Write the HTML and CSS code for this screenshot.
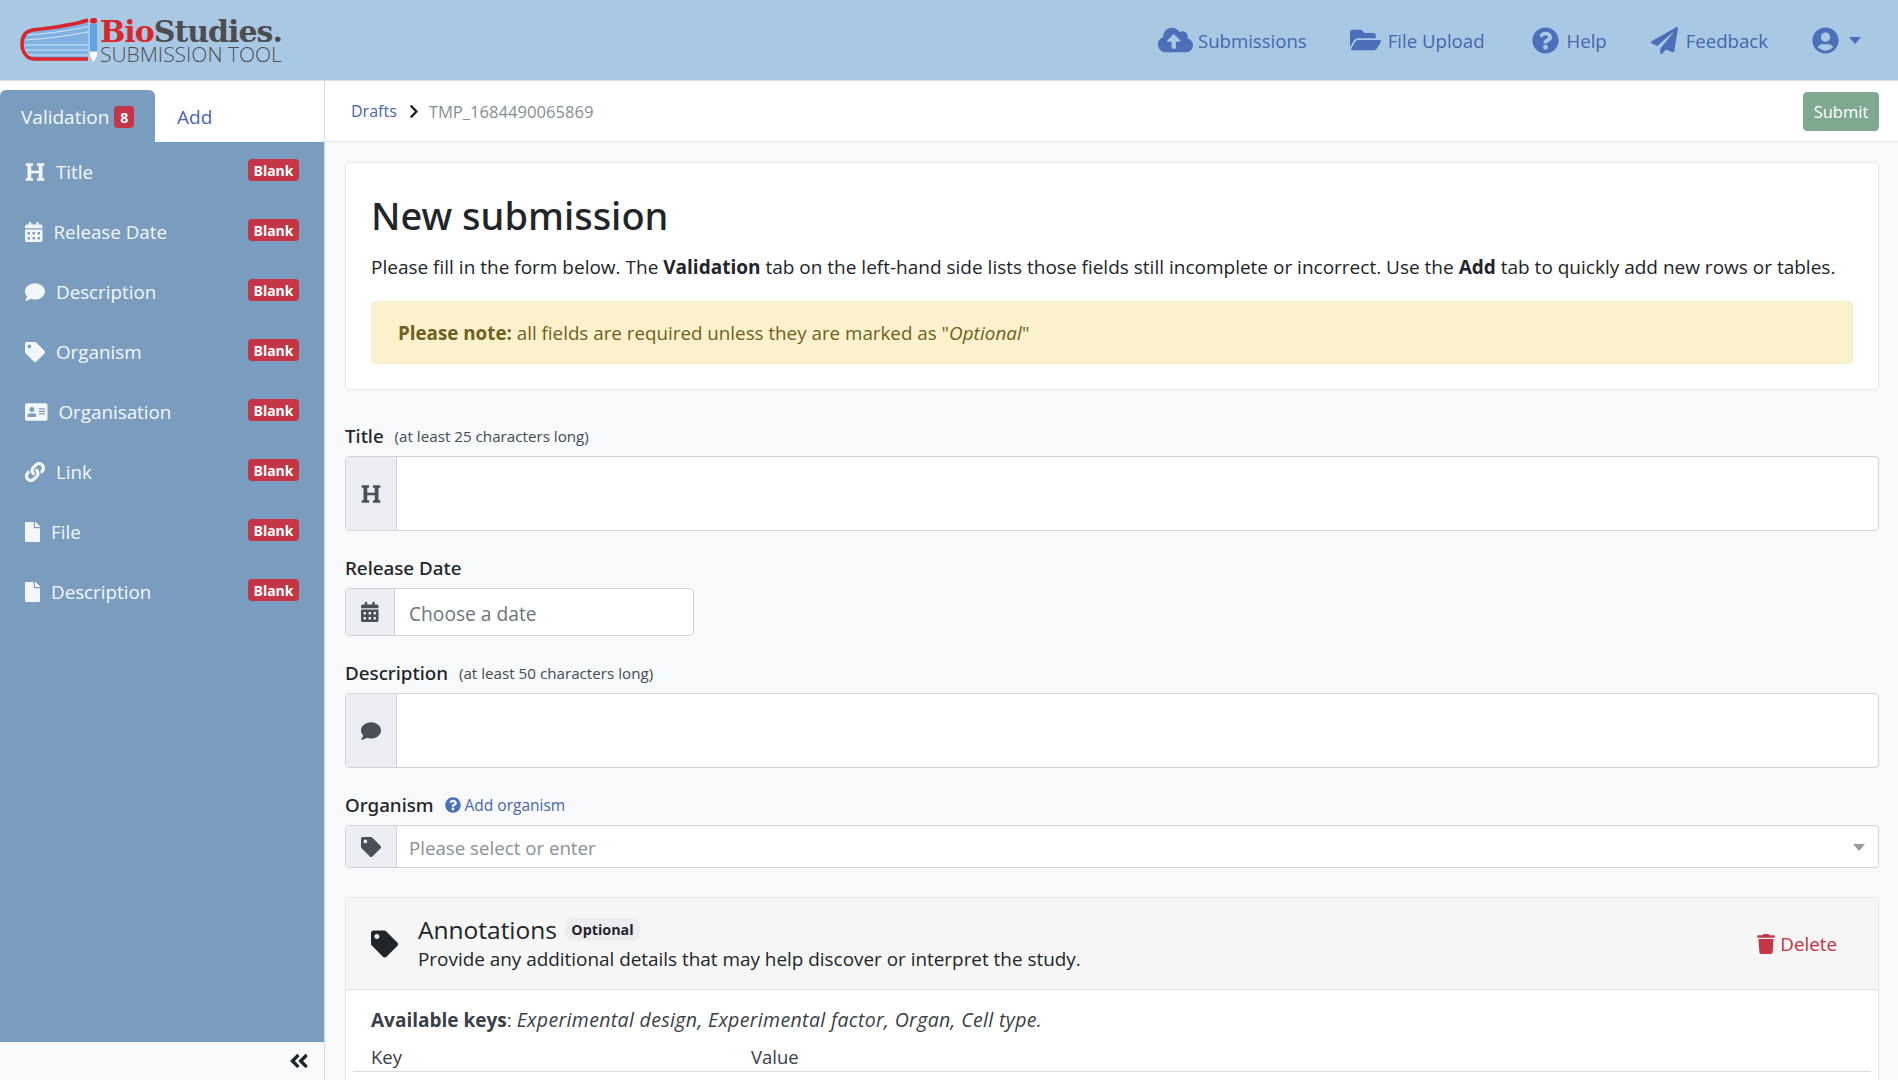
FILE: index.html
```html
<!DOCTYPE html>
<html lang="en">
<head>
<meta charset="utf-8">
<title>BioStudies Submission Tool</title>
<link rel="stylesheet" href="styles.css">
</head>
<body>
<svg class="sprite" xmlns="http://www.w3.org/2000/svg">
<defs>
<path id="i-heading" d="M448 96v320h32a16 16 0 0 1 16 16v32a16 16 0 0 1-16 16H320a16 16 0 0 1-16-16v-32a16 16 0 0 1 16-16h32V288H160v128h32a16 16 0 0 1 16 16v32a16 16 0 0 1-16 16H32a16 16 0 0 1-16-16v-32a16 16 0 0 1 16-16h32V96H32a16 16 0 0 1-16-16V48a16 16 0 0 1 16-16h160a16 16 0 0 1 16 16v32a16 16 0 0 1-16 16h-32v128h192V96h-32a16 16 0 0 1-16-16V48a16 16 0 0 1 16-16h160a16 16 0 0 1 16 16v32a16 16 0 0 1-16 16z"/>
<path id="i-cal" d="M0 464c0 26.5 21.5 48 48 48h352c26.5 0 48-21.5 48-48V192H0v272zm320-196c0-6.6 5.4-12 12-12h40c6.6 0 12 5.4 12 12v40c0 6.6-5.4 12-12 12h-40c-6.6 0-12-5.4-12-12v-40zm0 128c0-6.6 5.4-12 12-12h40c6.6 0 12 5.4 12 12v40c0 6.6-5.4 12-12 12h-40c-6.6 0-12-5.4-12-12v-40zM192 268c0-6.6 5.4-12 12-12h40c6.6 0 12 5.4 12 12v40c0 6.6-5.4 12-12 12h-40c-6.6 0-12-5.4-12-12v-40zm0 128c0-6.6 5.4-12 12-12h40c6.6 0 12 5.4 12 12v40c0 6.6-5.4 12-12 12h-40c-6.6 0-12-5.4-12-12v-40zM64 268c0-6.6 5.4-12 12-12h40c6.6 0 12 5.4 12 12v40c0 6.6-5.4 12-12 12H76c-6.6 0-12-5.4-12-12v-40zm0 128c0-6.6 5.4-12 12-12h40c6.6 0 12 5.4 12 12v40c0 6.6-5.4 12-12 12H76c-6.6 0-12-5.4-12-12v-40zM400 64h-48V16c0-8.8-7.2-16-16-16h-32c-8.8 0-16 7.2-16 16v48H160V16c0-8.8-7.2-16-16-16h-32c-8.8 0-16 7.2-16 16v48H48C21.5 64 0 85.5 0 112v48h448v-48c0-26.5-21.5-48-48-48z"/>
<path id="i-comment" d="M256 32C114.6 32 0 125.1 0 240c0 49.6 21.4 95 57 130.7C44.5 421.1 2.7 466 2.2 466.5c-2.2 2.3-2.8 5.7-1.5 8.7S4.8 480 8 480c66.3 0 116-31.8 140.6-51.4 32.7 12.3 69 19.4 107.4 19.4 141.4 0 256-93.1 256-208S397.4 32 256 32z"/>
<path id="i-tag" d="M0 252.118V48C0 21.49 21.49 0 48 0h204.118a48 48 0 0 1 33.941 14.059l211.882 211.882c18.745 18.745 18.745 49.137 0 67.882L293.823 497.941c-18.745 18.745-49.137 18.745-67.882 0L14.059 286.059A48 48 0 0 1 0 252.118zM112 64c-26.51 0-48 21.49-48 48s21.49 48 48 48 48-21.49 48-48-21.49-48-48-48z"/>
<path id="i-card" d="M528 32H48C21.5 32 0 53.5 0 80v352c0 26.5 21.5 48 48 48h480c26.5 0 48-21.5 48-48V80c0-26.5-21.5-48-48-48zm-352 96c35.3 0 64 28.7 64 64s-28.7 64-64 64-64-28.7-64-64 28.7-64 64-64zm112 236.8c0 10.6-10 19.2-22.4 19.2H86.4C74 384 64 375.4 64 364.8v-19.2c0-31.8 30.1-57.6 67.2-57.6h5c12.3 5.1 25.7 8 39.8 8s27.6-2.9 39.8-8h5c37.1 0 67.2 25.8 67.2 57.6v19.2zM512 312c0 4.4-3.6 8-8 8H360c-4.4 0-8-3.6-8-8v-16c0-4.4 3.6-8 8-8h144c4.4 0 8 3.6 8 8v16zm0-64c0 4.4-3.6 8-8 8H360c-4.4 0-8-3.6-8-8v-16c0-4.4 3.6-8 8-8h144c4.4 0 8 3.6 8 8v16zm0-64c0 4.4-3.6 8-8 8H360c-4.4 0-8-3.6-8-8v-16c0-4.4 3.6-8 8-8h144c4.4 0 8 3.6 8 8v16z"/>
<path id="i-link" d="M326.612 185.391c59.747 59.809 58.927 155.698.36 214.59-.11.12-.24.25-.36.37l-67.2 67.2c-59.27 59.27-155.699 59.262-214.96 0-59.27-59.26-59.27-155.7 0-214.96l37.106-37.106c9.84-9.84 26.786-3.3 27.294 10.606.648 17.722 3.826 35.527 9.69 52.721 1.986 5.822.567 12.262-3.783 16.612l-13.087 13.087c-28.026 28.026-28.905 73.66-1.155 101.96 28.024 28.579 74.086 28.749 102.325.51l67.2-67.19c28.191-28.191 28.073-73.757 0-101.83-3.701-3.694-7.429-6.564-10.341-8.569a16.037 16.037 0 0 1-6.947-12.606c-.396-10.567 3.348-21.456 11.698-29.806l21.054-21.055c5.521-5.521 14.182-6.199 20.584-1.731a152.482 152.482 0 0 1 20.522 17.197zM467.547 44.449c-59.261-59.262-155.69-59.27-214.96 0l-67.2 67.2c-.12.12-.25.25-.36.37-58.566 58.892-59.387 154.781.36 214.59a152.454 152.454 0 0 0 20.521 17.196c6.402 4.468 15.064 3.789 20.584-1.731l21.054-21.055c8.35-8.35 12.094-19.239 11.698-29.806a16.037 16.037 0 0 0-6.947-12.606c-2.912-2.005-6.64-4.875-10.341-8.569-28.073-28.073-28.191-73.639 0-101.83l67.2-67.19c28.239-28.239 74.3-28.069 102.325.51 27.75 28.3 26.872 73.934-1.155 101.96l-13.087 13.087c-4.35 4.35-5.769 10.79-3.783 16.612 5.864 17.194 9.042 34.999 9.69 52.721.509 13.906 17.454 20.446 27.294 10.606l37.106-37.106c59.271-59.259 59.271-155.699.001-214.959z"/>
<path id="i-file" d="M224 136V0H24C10.7 0 0 10.7 0 24v464c0 13.3 10.7 24 24 24h336c13.3 0 24-10.7 24-24V160H248c-13.2 0-24-10.8-24-24zm160-14.1v6.1H256V0h6.1c6.4 0 12.5 2.5 17 7l97.9 98c4.5 4.5 7 10.6 7 16.9z"/>
<path id="i-cloud" d="M537.6 226.6c4.1-10.7 6.4-22.4 6.4-34.6 0-53-43-96-96-96-19.7 0-38.1 6-53.3 16.2C367 64.2 315.3 32 256 32c-88.4 0-160 71.6-160 160 0 2.7.1 5.4.2 8.1C40.2 219.8 0 273.2 0 336c0 79.5 64.5 144 144 144h368c70.7 0 128-57.3 128-128 0-61.9-44-113.6-102.4-125.4zM393.4 288H328v112c0 8.8-7.2 16-16 16h-48c-8.8 0-16-7.2-16-16V288h-65.4c-14.3 0-21.4-17.2-11.3-27.3l105.4-105.4c6.2-6.2 16.4-6.2 22.6 0l105.4 105.4c10.1 10.1 2.9 27.3-11.3 27.3z"/>
<path id="i-folder" d="M572.694 292.093L500.27 416.248A63.997 63.997 0 0 1 444.989 448H45.025c-18.523 0-30.064-20.093-20.731-36.093l72.424-124.155A64 64 0 0 1 152 256h399.964c18.523 0 30.064 20.093 20.73 36.093zM152 224h328v-48c0-26.51-21.49-48-48-48H272l-64-64H48C21.49 64 0 85.49 0 112v278.046l69.077-118.418C86.214 242.25 117.989 224 152 224z"/>
<path id="i-question" d="M504 256c0 136.997-111.043 248-248 248S8 392.997 8 256C8 119.083 119.043 8 256 8s248 111.083 248 248zM262.655 90c-54.497 0-89.255 22.957-116.549 63.758-3.536 5.286-2.353 12.415 2.715 16.258l34.699 26.31c5.205 3.947 12.621 3.008 16.665-2.122 17.864-22.658 30.113-35.797 57.303-35.797 20.429 0 45.698 13.148 45.698 32.958 0 14.976-12.363 22.667-32.534 33.976C247.128 238.528 216 254.941 216 296v4c0 6.627 5.373 12 12 12h56c6.627 0 12-5.373 12-12v-1.333c0-28.462 83.186-29.647 83.186-106.667 0-58.002-60.165-102-116.531-102zM256 338c-25.365 0-46 20.635-46 46 0 25.364 20.635 46 46 46s46-20.636 46-46c0-25.365-20.635-46-46-46z"/>
<path id="i-plane" d="M476 3.2L12.5 270.6c-18.1 10.4-15.8 35.6 2.2 43.2L121 358.4l287.3-253.2c5.5-4.9 13.3 2.6 8.6 8.3L176 407v80.5c0 23.6 28.5 32.9 42.5 15.8L282 426l124.6 52.2c14.2 6 30.4-2.9 33-18.2l72-432C515 7.8 493.3-6.8 476 3.2z"/>
<path id="i-user" d="M248 8C111 8 0 119 0 256s111 248 248 248 248-111 248-248S385 8 248 8zm0 96c48.6 0 88 39.4 88 88s-39.4 88-88 88-88-39.4-88-88 39.4-88 88-88zm0 344c-58.7 0-111.3-26.6-146.5-68.2 18.8-35.4 55.6-59.8 98.5-59.8 2.4 0 4.8.4 7.1 1.1 13 4.2 26.6 6.9 40.9 6.9 14.3 0 28-2.7 40.9-6.9 2.3-.7 4.7-1.1 7.1-1.1 42.9 0 79.7 24.4 98.5 59.8C359.3 421.4 306.7 448 248 448z"/>
<path id="i-trash" d="M432 32H312l-9.4-18.7A24 24 0 0 0 281.1 0H166.8a23.72 23.72 0 0 0-21.4 13.3L136 32H16A16 16 0 0 0 0 48v32a16 16 0 0 0 16 16h416a16 16 0 0 0 16-16V48a16 16 0 0 0-16-16zM53.2 467a48 48 0 0 0 47.9 45h245.8a48 48 0 0 0 47.9-45L416 128H32z"/>
<path id="i-dbl" d="M223.7 239l136-136c9.4-9.4 24.6-9.4 33.9 0l22.6 22.6c9.4 9.4 9.4 24.6 0 33.9L319.9 256l96.4 96.4c9.4 9.4 9.4 24.6 0 33.9L393.7 409c-9.4 9.4-24.6 9.4-33.9 0l-136-136c-9.5-9.4-9.5-24.6-.1-34zm-192 34l136 136c9.4 9.4 24.6 9.4 33.9 0l22.6-22.6c9.4-9.4 9.4-24.6 0-33.9L127.9 256l96.4-96.4c9.4-9.4 9.4-24.6 0-33.9L201.7 103c-9.4-9.4-24.6-9.4-33.9 0l-136 136c-9.5 9.4-9.5 24.6-.1 34z"/>
<path id="i-right" d="M285.476 272.971L91.132 467.314c-9.373 9.373-24.569 9.373-33.941 0l-22.667-22.667c-9.357-9.357-9.375-24.522-.04-33.901L188.505 256 34.484 101.255c-9.335-9.379-9.317-24.544.04-33.901l22.667-22.667c9.373-9.373 24.569-9.373 33.941 0L285.475 239.03c9.373 9.372 9.373 24.568.001 33.941z"/>
</defs>
</svg>

<header class="topbar">
  <a class="logo">
    <svg class="logo-mark" viewBox="0 0 78 44">
      <path class="pages" d="M68 3.5C50 8 28 10 14 11.5 8 12.5 4 17 4 23s4 17 10 17h54z"/>
      <path class="page-line" d="M5 17C30 16 52 12 68 8.5M5 22C30 21 52 17 68 14M5 27H68M5 32H68M7 37H68"/>
      <path class="book-edge" d="M68 2C50 8 30 10 13 12 6 13 2 18 2 26s5 15 12 15h54"/>
      <rect class="pencil-body" x="70" y="6" width="7" height="27"/>
      <rect class="pencil-cap" x="70" y="0" width="7" height="5.5" rx="2.5"/>
      <path class="pencil-tip" d="M70 34h7v4l-3.500 6-3.500-6z"/>
    </svg>
    <span class="logo-text">
      <span class="logo-top"><span class="logo-bio">Bio</span>Studies.</span>
      <span class="logo-sub">SUBMISSION TOOL</span>
    </span>
  </a>
  <nav class="topnav">
    <a class="topnav-item t-sub"><svg class="ti ti-cloud" viewBox="0 0 640 512"><use href="#i-cloud"/></svg>Submissions</a>
    <a class="topnav-item t-file"><svg class="ti ti-folder" viewBox="0 0 576 512"><use href="#i-folder"/></svg>File Upload</a>
    <a class="topnav-item"><svg class="ti" viewBox="0 0 512 512"><use href="#i-question"/></svg>Help</a>
    <a class="topnav-item"><svg class="ti" viewBox="0 0 512 512"><use href="#i-plane"/></svg>Feedback</a>
    <a class="topnav-item user"><svg class="ti" viewBox="0 0 496 512"><use href="#i-user"/></svg><span class="caret"></span></a>
  </nav>
</header>

<div class="layout">
  <aside class="side">
    <div class="tabs">
      <a class="tab active">Validation <span class="count">8</span></a>
      <a class="tab">Add</a>
    </div>
    <ul class="side-list">
      <li class="side-item"><svg class="si" viewBox="0 0 512 512"><use href="#i-heading"/></svg><span class="side-label">Title</span><span class="blank">Blank</span></li>
      <li class="side-item"><svg class="si" viewBox="0 0 448 512"><use href="#i-cal"/></svg><span class="side-label">Release Date</span><span class="blank">Blank</span></li>
      <li class="side-item"><svg class="si" viewBox="0 0 512 512"><use href="#i-comment"/></svg><span class="side-label">Description</span><span class="blank">Blank</span></li>
      <li class="side-item"><svg class="si" viewBox="0 0 512 512"><use href="#i-tag"/></svg><span class="side-label">Organism</span><span class="blank">Blank</span></li>
      <li class="side-item"><svg class="si" viewBox="0 0 576 512"><use href="#i-card"/></svg><span class="side-label">Organisation</span><span class="blank">Blank</span></li>
      <li class="side-item"><svg class="si" viewBox="0 0 512 512"><use href="#i-link"/></svg><span class="side-label">Link</span><span class="blank">Blank</span></li>
      <li class="side-item"><svg class="si" viewBox="0 0 384 512"><use href="#i-file"/></svg><span class="side-label">File</span><span class="blank">Blank</span></li>
      <li class="side-item"><svg class="si" viewBox="0 0 384 512"><use href="#i-file"/></svg><span class="side-label">Description</span><span class="blank">Blank</span></li>
    </ul>
    <div class="side-foot"><svg class="collapse" viewBox="0 0 448 512"><use href="#i-dbl"/></svg></div>
  </aside>

  <main class="main">
    <div class="crumbs">
      <a class="crumb-link">Drafts</a>
      <svg class="crumb-sep" viewBox="0 0 320 512"><use href="#i-right"/></svg>
      <span class="crumb-cur">TMP_1684490065869</span>
      <button class="submit" type="button">Submit</button>
    </div>
    <div class="form">
      <section class="intro">
        <h1 class="intro-title">New submission</h1>
        <p class="intro-text">Please fill in the form below. The <b>Validation</b> tab on the left-hand side lists those fields still incomplete or incorrect. Use the <b>Add</b> tab to quickly add new rows or tables.</p>
        <div class="note"><b>Please note:</b> all fields are required unless they are marked as "<i>Optional</i>"</div>
      </section>

      <div class="field f-title">
        <label class="lab">Title <small class="hint">(at least 25 characters long)</small></label>
        <div class="group tall"><span class="addon"><svg class="ai" viewBox="0 0 512 512"><use href="#i-heading"/></svg></span><span class="box"></span></div>
      </div>
      <div class="field f-date">
        <label class="lab">Release Date</label>
        <div class="group date"><span class="addon"><svg class="ai" viewBox="0 0 448 512"><use href="#i-cal"/></svg></span><span class="box ph-dark">Choose a date</span></div>
      </div>
      <div class="field f-desc">
        <label class="lab">Description <small class="hint">(at least 50 characters long)</small></label>
        <div class="group tall"><span class="addon"><svg class="ai" viewBox="0 0 512 512"><use href="#i-comment"/></svg></span><span class="box"></span></div>
      </div>
      <div class="field f-org">
        <label class="lab">Organism <a class="add-org"><svg class="add-ic" viewBox="0 0 512 512"><use href="#i-question"/></svg>Add organism</a></label>
        <div class="group sel"><span class="addon"><svg class="ai" viewBox="0 0 512 512"><use href="#i-tag"/></svg></span><span class="box ph">Please select or enter<span class="sel-caret"></span></span></div>
      </div>

      <section class="anno">
        <div class="anno-head">
          <svg class="anno-ic" viewBox="0 0 512 512"><use href="#i-tag"/></svg>
          <div class="anno-txt">
            <div class="anno-title">Annotations <span class="optional">Optional</span></div>
            <div class="anno-sub">Provide any additional details that may help discover or interpret the study.</div>
          </div>
          <a class="del"><svg class="del-ic" viewBox="0 0 448 512"><use href="#i-trash"/></svg>Delete</a>
        </div>
        <div class="anno-body">
          <p class="keys"><b>Available keys</b>: <i>Experimental design, Experimental factor, Organ, Cell type.</i></p>
          <div class="kv"><span class="kv-k">Key</span><span>Value</span></div>
        </div>
      </section>
    </div>
  </main>
</div>
</body>
</html>
```

FILE: styles.css
```css
* { box-sizing: border-box; }
html, body { margin: 0; height: 100%; }
body {
  height: 1080px;
  overflow: hidden;
  display: flex;
  flex-direction: column;
  font-family: "Open Sans", "Noto Sans", sans-serif;
  font-size: 19px;
  color: #212529;
  background: #f8f9fb;
}
.sprite { display: none; }
svg { fill: currentColor; display: block; flex: none; }

/* top bar */
.topbar {
  flex: none;
  height: 81px;
  background: #a9c8e4;
  border-bottom: 1px solid #d9dfe8;
  display: flex;
  align-items: center;
  justify-content: space-between;
  padding: 0 37px 0 20px;
}
.logo { display: flex; align-items: flex-start; height: 44px; margin-top: 0; }
.logo-mark { width: 78px; height: 44px; }
.pages { fill: #7fb2e2; }
.page-line { fill: none; stroke: #d2e3f4; stroke-width: 1.2; }
.book-edge { fill: none; stroke: #d9262c; stroke-width: 3.6; }
.pencil-body { fill: #5fa3df; }
.pencil-cap { fill: #d9262c; }
.pencil-tip { fill: #fff; }
.logo-text { display: flex; flex-direction: column; margin-left: 2px; width: 181px; }
.logo-top {
  font-family: "DejaVu Serif", serif;
  font-weight: 700;
  font-size: 30px;
  line-height: 27px;
  letter-spacing: -1px;
  color: #4d4d4f;
  white-space: nowrap;
}
.logo-bio { color: #d9262c; }
.logo-sub {
  font-weight: 300;
  font-size: 21px;
  line-height: 18px;
  color: #4b4f57;
  white-space: nowrap;
}
.topnav { display: flex; align-items: center; gap: 44px; color: #4766ae; }
.topnav-item { display: flex; align-items: center; gap: 8px; font-size: 18.600px; white-space: nowrap; }
.t-sub { gap: 5px; margin-right: -1px; }
.t-file { gap: 7px; margin-right: 3px; }
.ti { height: 27px; width: 27px; color: #4b6fb8; }
.ti-cloud { width: 35px; height: 28px; }
.ti-folder { width: 31px; height: 28px; }
.user { gap: 10px; }
.caret { border: 6px solid transparent; border-top: 7px solid #4b6fb8; border-bottom: 0; }

/* layout */
.layout { flex: 1; min-height: 0; display: flex; }
.side {
  flex: none;
  width: 325px;
  display: flex;
  flex-direction: column;
  border-right: 1px solid #d5dae3;
  background: #f8f9fb;
}
.tabs {
  flex: none;
  height: 61px;
  padding-top: 9px;
  display: flex;
  background: #fff;
}
.tab { display: flex; align-items: center; padding: 2px 25px 0 22px; color: #4766ae; font-size: 19px; }
.tab.active {
  width: 155px;
  padding-left: 21px;
  padding-right: 0;
  color: #f3f7fb;
  background: #7a9dbf;
  border-radius: 6px 6px 0 0;
  white-space: pre;
}
.count {
  width: 20px;
  height: 22px;
  display: flex;
  align-items: center;
  justify-content: center;
  font-size: 14px;
  font-weight: 700;
  color: #fff;
  background: #c43546;
  border-radius: 4px;
}
.side-list {
  flex: 1;
  margin: 0;
  padding: 0;
  list-style: none;
  background: #7a9dbf;
  border-bottom: 1px solid #7092b5;
}
.side-item {
  height: 60px;
  display: flex;
  align-items: center;
  padding: 0 25px;
  color: #f3f7fb;
  font-size: 18.800px;
}
.si { height: 20px; width: auto; margin-right: 11px; }
.side-label { flex: 1; }
.blank {
  margin-top: -4px;
  width: 51px;
  height: 22px;
  display: flex;
  align-items: center;
  justify-content: center;
  font-size: 14px;
  font-weight: 700;
  color: #fff;
  background: #c43546;
  border-radius: 4px;
}
.side-foot { flex: none; height: 38px; display: flex; align-items: center; justify-content: flex-end; padding-right: 15px; }
.collapse { width: 20px; height: 22px; color: #212529; }

/* main */
.main { flex: 1; min-width: 0; display: flex; flex-direction: column; }
.crumbs {
  flex: none;
  height: 61px;
  display: flex;
  align-items: center;
  padding: 0 19px 0 26px;
  background: #fff;
  border-bottom: 1px solid #e6e8ee;
  font-size: 16px;
}
.crumb-link { color: #4766ae; }
.crumb-sep { width: 10px; height: 15px; margin: 0 10px 0 12px; color: #212529; }
.crumb-cur { flex: 1; color: #868e96; font-size: 16.600px; }
.submit {
  width: 76px;
  height: 39px;
  border: 1px solid #7ea98f;
  border-radius: 4px;
  background: #7ea98f;
  color: #fff;
  font: inherit;
  font-size: 16.500px;
  padding: 0;
}
.form { flex: 1; min-height: 0; overflow: hidden; padding: 20px 19px 0 20px; }
.intro {
  height: 228px;
  padding: 26px 25px 0;
  background: #fff;
  border: 1px solid #e3e5ea;
  border-radius: 4px;
}
.intro-title { margin: 0; font-family: "Noto Sans", "Open Sans", sans-serif; font-size: 38px; font-weight: 500; line-height: 52px; color: #212529; }
.intro-text { margin: 13px 0 0; line-height: 27px; white-space: nowrap; }
.note {
  margin-top: 20px;
  height: 63px;
  padding: 0 26px;
  display: flex;
  align-items: center;
  white-space: pre;
  font-size: 18.800px;
  background: #fbf1cd;
  border: 1px solid #f8eec7;
  border-radius: 4px;
  color: #6f6020;
}
.note b { font-weight: 700; }
.note i { letter-spacing: .1px; }
.field { margin: 0; }
.f-title { margin-top: 33px; }
.f-date { margin-top: 24px; }
.f-desc { margin-top: 24px; }
.f-org { margin-top: 24px; }
.lab { display: flex; align-items: center; height: 26px; font-family: "Noto Sans", "Open Sans", sans-serif; font-weight: 500; font-size: 18.800px; white-space: pre; }
.hint { font-size: 15.200px; font-weight: 400; margin-left: 6px; color: #444b52; font-family: "Open Sans", sans-serif; }
.add-org { display: flex; align-items: center; margin-left: 6px; font-family: "Open Sans", sans-serif; font-size: 15.500px; font-weight: 400; color: #4766ae; }
.add-ic { width: 16px; height: 16px; margin-right: 4px; color: #4b6fb8; }
.group { margin-top: 7px; display: flex; border: 1px solid #ced4da; border-radius: 4px; overflow: hidden; background: #fff; }
.tall { height: 75px; }
.date { width: 349px; height: 48px; }
.sel { height: 43px; }
.addon {
  flex: none;
  width: 51px;
  display: flex;
  align-items: center;
  justify-content: center;
  background: #eceef1;
  border-right: 1px solid #ced4da;
  color: #495057;
}
.date .addon { width: 49px; }
.ai { height: 20px; width: auto; }
.box { flex: 1; display: flex; align-items: center; padding: 2px 12px 0; color: #8a9097; font-size: 18.700px; }
.ph-dark { color: #6c757d; font-size: 19.200px; padding-left: 14px; }
.ph { justify-content: space-between; }
.sel-caret { border: 6px solid transparent; border-top: 7px solid #999; border-bottom: 0; margin-right: 1px; }

/* annotations */
.anno {
  margin-top: 29px;
  background: #fff;
  border: 1px solid #e3e5ea;
  border-bottom: 0;
  border-radius: 4px 4px 0 0;
  height: 190px;
}
.anno-head {
  height: 92px;
  display: flex;
  align-items: center;
  padding: 0 41px 0 25px;
  background: #f6f6f6;
  border-bottom: 1px solid #e3e3e3;
}
.anno-ic { width: 27px; height: 28px; margin-top: 1px; }
.anno-txt { flex: 1; margin-left: 20px; }
.anno-title { display: flex; align-items: center; height: 30px; font-size: 24.500px; white-space: pre; }
.optional {
  margin-left: 2px;
  height: 23px;
  padding: 0 6px;
  display: flex;
  align-items: center;
  font-size: 14.300px;
  font-weight: 700;
  background: #ededf1;
  border-radius: 8px;
}
.anno-sub { line-height: 27px; margin-top: 2px; font-size: 18.900px; }
.del { display: flex; align-items: center; gap: 5px; color: #c8303f; font-size: 18.800px; }
.del-ic { width: 18px; height: 20px; color: #c43546; }
.anno-body { padding: 16px 7px 0; }
.keys { margin: 0 0 0 18px; line-height: 27px; color: #3a4047; white-space: nowrap; }
.keys b { font-weight: 700; }
.keys i { font-size: 19.500px; letter-spacing: .35px; }
.kv { display: flex; height: 38px; padding: 8px 0 0 18px; align-items: center; border-bottom: 1px solid #d8dadd; color: #3a4047; font-size: 18.500px; }
.kv-k { width: 380px; }
```
